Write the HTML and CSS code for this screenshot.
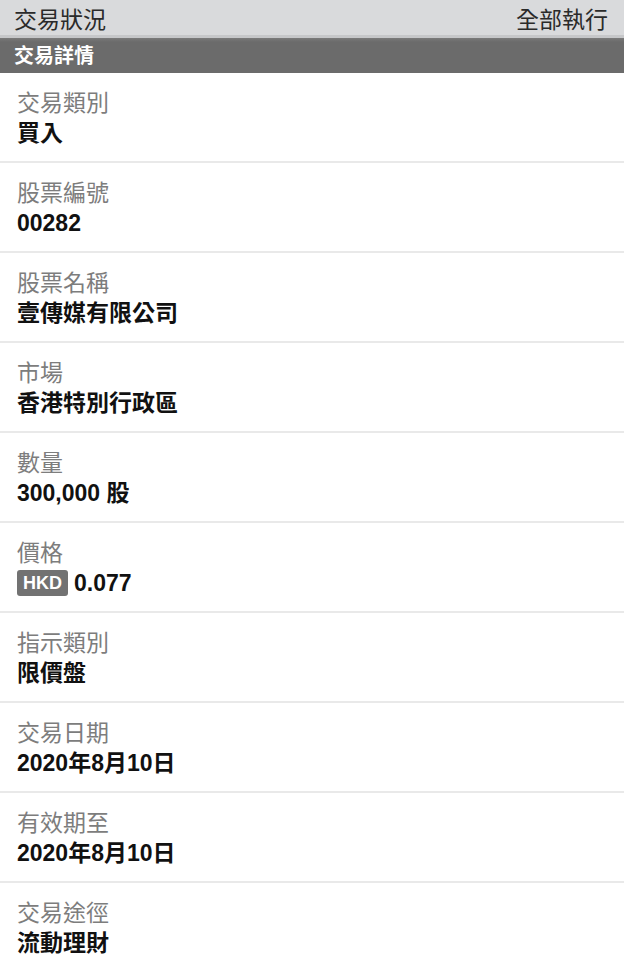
FILE: index.html
```html
<!DOCTYPE html>
<html lang="zh-Hant">
<head>
  <meta charset="UTF-8" />
  <meta name="viewport" content="width=device-width, initial-scale=1.0" />
  <title>交易狀況</title>
  <link rel="stylesheet" href="styles.css">
</head>
<body>
  <div class="topbar">
    <span>交易狀況</span>
    <span>全部執行</span>
  </div>
  <div class="section-head">交易詳情</div>

  <div class="rows">
    <div class="row"><div class="label">交易類別</div><div class="value">買入</div></div>
    <div class="row"><div class="label">股票編號</div><div class="value">00282</div></div>
    <div class="row"><div class="label">股票名稱</div><div class="value">壹傳媒有限公司</div></div>
    <div class="row"><div class="label">市場</div><div class="value">香港特別行政區</div></div>
    <div class="row"><div class="label">數量</div><div class="value">300,000 股</div></div>
    <div class="row"><div class="label">價格</div><div class="value"><span class="ccy">HKD</span>0.077</div></div>
    <div class="row"><div class="label">指示類別</div><div class="value">限價盤</div></div>
    <div class="row"><div class="label">交易日期</div><div class="value">2020年8月10日</div></div>
    <div class="row"><div class="label">有效期至</div><div class="value">2020年8月10日</div></div>
    <div class="row"><div class="label">交易途徑</div><div class="value">流動理財</div></div>
  </div>
</body>
</html>
```

FILE: styles.css
```css
body { margin: 0; background: #fff; font-family: "Liberation Sans", "Noto Sans CJK TC", sans-serif; }

.topbar {
  display: flex; justify-content: space-between; align-items: center;
  height: 35px; padding: 0 16px 0 14px;
  background: #d9dadc; border-bottom: 3px solid #c6c7c9;
  font-size: 23px; color: #2a2a2a;
}
.section-head {
  height: 35px; line-height: 36px; padding-left: 14px;
  background: linear-gradient(#7a7a7a, #6b6b6b 4px);
  color: #fff; font-size: 20px; font-weight: bold;
}

.row { padding: 15px 17px 13px; border-bottom: 2px solid #e9e9e9; }
.label { font-size: 23px; line-height: 30px; color: #7d7d7d; }
.value { font-size: 23px; line-height: 30px; font-weight: bold; color: #111; display: flex; align-items: center; }
.ccy {
  display: inline-block; background: #727272; color: #fff;
  font-size: 18px; line-height: 26px; padding: 0 6px; border-radius: 3px;
  margin-right: 6px;
}
```
